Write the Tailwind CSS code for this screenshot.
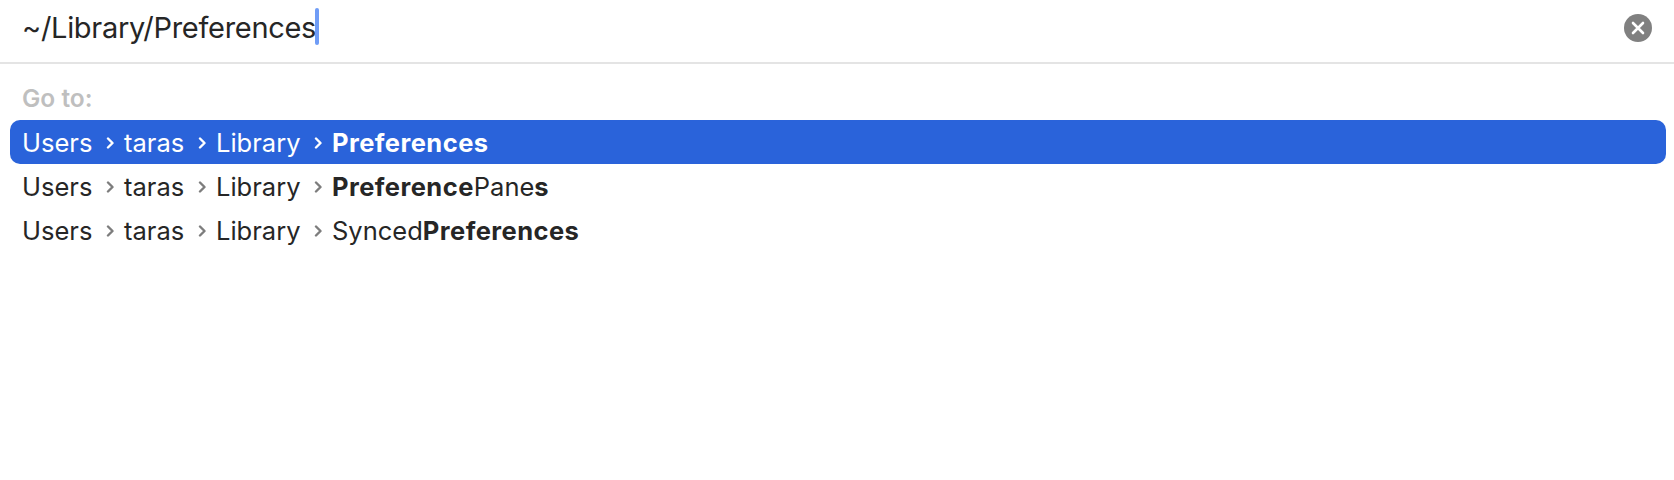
<!DOCTYPE html>
<html lang="en">
<head>
  <meta charset="UTF-8">
  <title>Go to folder</title>
  <script src="https://cdn.jsdelivr.net/npm/@tailwindcss/browser@4"></script>
</head>
<body class="bg-white font-['Inter',sans-serif] text-[#262626] w-[1674px] h-[480px] overflow-hidden">

  <!-- path field -->
  <div class="h-[55px] flex items-center justify-between pl-[22px] pr-[22px] pb-[7px] border-b-2 border-[#e4e4e4] box-content">
    <div class="flex items-center text-[29px] leading-[38px] tracking-[-0.3px]">
      <span>~/Library/Preferences</span>
      <span class="w-[4px] h-[37px] -ml-[1px] -mt-[2px] rounded-[2px] bg-[#6f9cf6]"></span>
    </div>
    <svg class="w-[28px] h-[28px]" viewBox="0 0 28 28">
      <circle cx="14" cy="14" r="14" fill="#808080"/>
      <path d="M9 9 L19 19 M19 9 L9 19" stroke="#fff" stroke-width="2.6" stroke-linecap="round"/>
    </svg>
  </div>

  <div class="pl-[10px] pr-[8px]">
    <div class="pl-[12px] pt-[21px] pb-[9px] text-[24.5px] leading-[26px] font-semibold text-[#bfbfbf]">Go to:</div>

    <div class="flex flex-col text-[25.5px] leading-[44px]">
      <div class="h-[44px] flex items-center pl-[12px] pt-[2px] rounded-[10px] bg-[#2a63da] text-white">
        <span class="w-[84px]">Users</span>
        <svg class="w-[8px] h-[14px] mr-[10px]" viewBox="0 0 8 14"><path d="M2 2.5 L6.5 7 L2 11.5" fill="none" stroke="#fff" stroke-width="2.4" stroke-linecap="round" stroke-linejoin="round"/></svg>
        <span class="w-[74px]">taras</span>
        <svg class="w-[8px] h-[14px] mr-[10px]" viewBox="0 0 8 14"><path d="M2 2.5 L6.5 7 L2 11.5" fill="none" stroke="#fff" stroke-width="2.4" stroke-linecap="round" stroke-linejoin="round"/></svg>
        <span class="w-[98px]">Library</span>
        <svg class="w-[8px] h-[14px] mr-[10px]" viewBox="0 0 8 14"><path d="M2 2.5 L6.5 7 L2 11.5" fill="none" stroke="#fff" stroke-width="2.4" stroke-linecap="round" stroke-linejoin="round"/></svg>
        <span class="font-bold tracking-[0.45px]">Preferences</span>
      </div>
      <div class="h-[44px] flex items-center pl-[12px] pt-[2px]">
        <span class="w-[84px]">Users</span>
        <svg class="w-[8px] h-[14px] mr-[10px]" viewBox="0 0 8 14"><path d="M2 2.5 L6.5 7 L2 11.5" fill="none" stroke="#7d7d7d" stroke-width="2.4" stroke-linecap="round" stroke-linejoin="round"/></svg>
        <span class="w-[74px]">taras</span>
        <svg class="w-[8px] h-[14px] mr-[10px]" viewBox="0 0 8 14"><path d="M2 2.5 L6.5 7 L2 11.5" fill="none" stroke="#7d7d7d" stroke-width="2.4" stroke-linecap="round" stroke-linejoin="round"/></svg>
        <span class="w-[98px]">Library</span>
        <svg class="w-[8px] h-[14px] mr-[10px]" viewBox="0 0 8 14"><path d="M2 2.5 L6.5 7 L2 11.5" fill="none" stroke="#7d7d7d" stroke-width="2.4" stroke-linecap="round" stroke-linejoin="round"/></svg>
        <span><b class="font-bold tracking-[0.45px]">Preference</b>Pane<b class="font-bold">s</b></span>
      </div>
      <div class="h-[44px] flex items-center pl-[12px] pt-[2px]">
        <span class="w-[84px]">Users</span>
        <svg class="w-[8px] h-[14px] mr-[10px]" viewBox="0 0 8 14"><path d="M2 2.5 L6.5 7 L2 11.5" fill="none" stroke="#7d7d7d" stroke-width="2.4" stroke-linecap="round" stroke-linejoin="round"/></svg>
        <span class="w-[74px]">taras</span>
        <svg class="w-[8px] h-[14px] mr-[10px]" viewBox="0 0 8 14"><path d="M2 2.5 L6.5 7 L2 11.5" fill="none" stroke="#7d7d7d" stroke-width="2.4" stroke-linecap="round" stroke-linejoin="round"/></svg>
        <span class="w-[98px]">Library</span>
        <svg class="w-[8px] h-[14px] mr-[10px]" viewBox="0 0 8 14"><path d="M2 2.5 L6.5 7 L2 11.5" fill="none" stroke="#7d7d7d" stroke-width="2.4" stroke-linecap="round" stroke-linejoin="round"/></svg>
        <span>Synced<b class="font-bold tracking-[0.45px]">Preferences</b></span>
      </div>
    </div>
  </div>

</body>
</html>
